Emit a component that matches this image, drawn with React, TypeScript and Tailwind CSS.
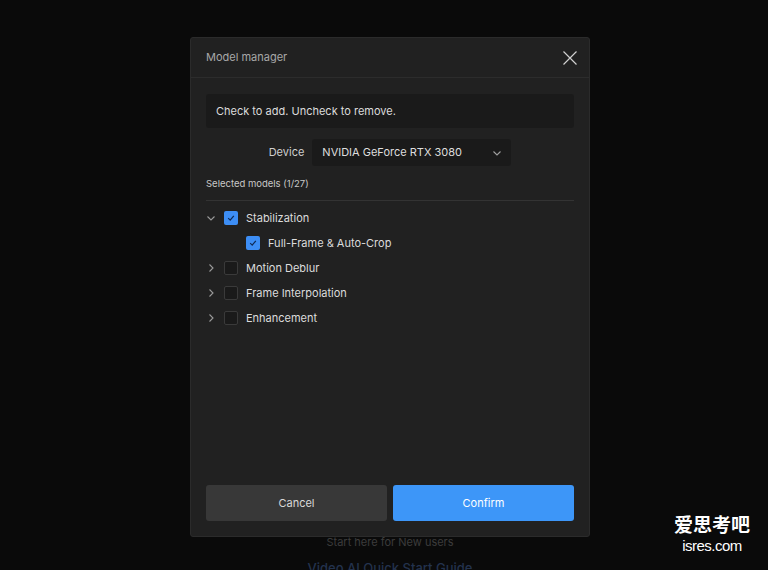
import { useState } from "react";

type Model = {
  name: string;
  checked: boolean;
  open?: boolean;
  children?: { name: string; checked: boolean }[];
};

const models: Model[] = [
  {
    name: "Stabilization",
    checked: true,
    open: true,
    children: [{ name: "Full-Frame & Auto-Crop", checked: true }],
  },
  { name: "Motion Deblur", checked: false },
  { name: "Frame Interpolation", checked: false },
  { name: "Enhancement", checked: false },
];

function Chevron({ open }: { open?: boolean }) {
  return (
    <svg width="10" height="10" viewBox="0 0 10 10" className="text-[#9a9a9a]">
      {open ? (
        <path d="M1.5 3.5 L5 7 L8.5 3.5" fill="none" stroke="currentColor" strokeWidth="1.1" />
      ) : (
        <path d="M3.5 1.5 L7 5 L3.5 8.5" fill="none" stroke="currentColor" strokeWidth="1.1" />
      )}
    </svg>
  );
}

function Checkbox({ checked }: { checked: boolean }) {
  if (checked) {
    return (
      <span className="flex h-[14px] w-[14px] items-center justify-center rounded-[2px] bg-[#3d8ef5]">
        <svg width="10" height="10" viewBox="0 0 10 10">
          <path d="M2.2 5.2 L4.2 7.2 L7.8 2.8" fill="none" stroke="#0f2a55" strokeWidth="1.2" />
        </svg>
      </span>
    );
  }
  return <span className="h-[14px] w-[14px] rounded-[2px] border border-[#3a3a3a] bg-[#1a1a1a]" />;
}

export default function App() {
  const [items] = useState(models);

  return (
    <div className="relative h-[570px] w-[768px] overflow-hidden bg-[#0a0a0a] font-['Inter','Noto_Sans',sans-serif]">
      {/* page behind the modal */}
      <div className="flex flex-col items-center pt-[534px] pl-[12px]">
        <p className="text-[11px] text-[#3c3c3c]">Start here for New users</p>
        <p className="mt-[8px] text-[13px] font-medium text-[#23324d]">Video AI Quick Start Guide</p>
      </div>

      {/* modal */}
      <div className="absolute left-[190px] top-[37px] flex h-[500px] w-[400px] flex-col rounded-[3px] border border-[#2b2b2b] bg-[#212121]">
        <div className="flex h-[40px] items-center justify-between border-b border-[#2c2c2c] pl-[15px] pr-[11px]">
          <span className="text-[11px] text-[#a8a8a8]">Model manager</span>
          <svg width="16" height="16" viewBox="0 0 16 16" className="text-[#d0d0d0]">
            <path d="M1.5 1.5 L14.5 14.5 M14.5 1.5 L1.5 14.5" stroke="currentColor" strokeWidth="1.2" />
          </svg>
        </div>

        <div className="flex flex-1 flex-col px-[15px] pt-[16px]">
          <div className="flex h-[34px] items-center rounded-[3px] bg-[#1a1a1a] px-[10px] text-[11px] text-[#dcdcdc]">
            Check to add. Uncheck to remove.
          </div>

          <div className="mt-[11px] flex items-center justify-center gap-[8px]">
            <span className="text-[11px] text-[#cfcfcf]">Device</span>
            <div className="flex h-[27px] w-[199px] items-center justify-between rounded-[3px] bg-[#1a1a1a] pl-[10px] pr-[9px]">
              <span className="text-[11px] text-[#dedede]">NVIDIA GeForce RTX 3080</span>
              <svg width="10" height="10" viewBox="0 0 10 10" className="text-[#a0a0a0]">
                <path d="M1.5 3.5 L5 7 L8.5 3.5" fill="none" stroke="currentColor" strokeWidth="1.1" />
              </svg>
            </div>
          </div>

          <div className="mt-[11px] border-b border-[#333333] pb-[9px] text-[9.5px] text-[#c8c8c8]">
            Selected models (1/27)
          </div>

          <div className="mt-[4px] flex flex-col">
            {items.map((m) => (
              <div key={m.name} className="flex flex-col">
                <div className="flex h-[25px] items-center">
                  <span className="flex w-[18px] items-center">
                    <Chevron open={m.open} />
                  </span>
                  <Checkbox checked={m.checked} />
                  <span className="ml-[8px] text-[11px] text-[#dcdcdc]">{m.name}</span>
                </div>
                {m.open &&
                  m.children?.map((c) => (
                    <div key={c.name} className="flex h-[25px] items-center pl-[40px]">
                      <Checkbox checked={c.checked} />
                      <span className="ml-[8px] text-[11px] text-[#dcdcdc]">{c.name}</span>
                    </div>
                  ))}
              </div>
            ))}
          </div>

          <div className="mt-auto mb-[15px] flex gap-[6px]">
            <button
              type="button"
              className="h-[36px] flex-1 rounded-[3px] bg-[#383838] text-[11px] text-[#d8d8d8]"
            >
              Cancel
            </button>
            <button
              type="button"
              className="h-[36px] flex-1 rounded-[3px] bg-[#3d96f8] text-[11px] text-white"
            >
              Confirm
            </button>
          </div>
        </div>
      </div>

      {/* watermark */}
      <div className="absolute left-[674px] top-[513px] flex flex-col items-center text-white">
        <span className="text-[19px] leading-[22px] font-bold font-['Noto_Sans_CJK_SC',sans-serif]">爱思考吧</span>
        <span className="mt-[2px] text-[15px] leading-[17px] tracking-[-0.5px] font-['Liberation_Sans_Narrow','Liberation_Sans',sans-serif]">
          isres.com
        </span>
      </div>
    </div>
  );
}
